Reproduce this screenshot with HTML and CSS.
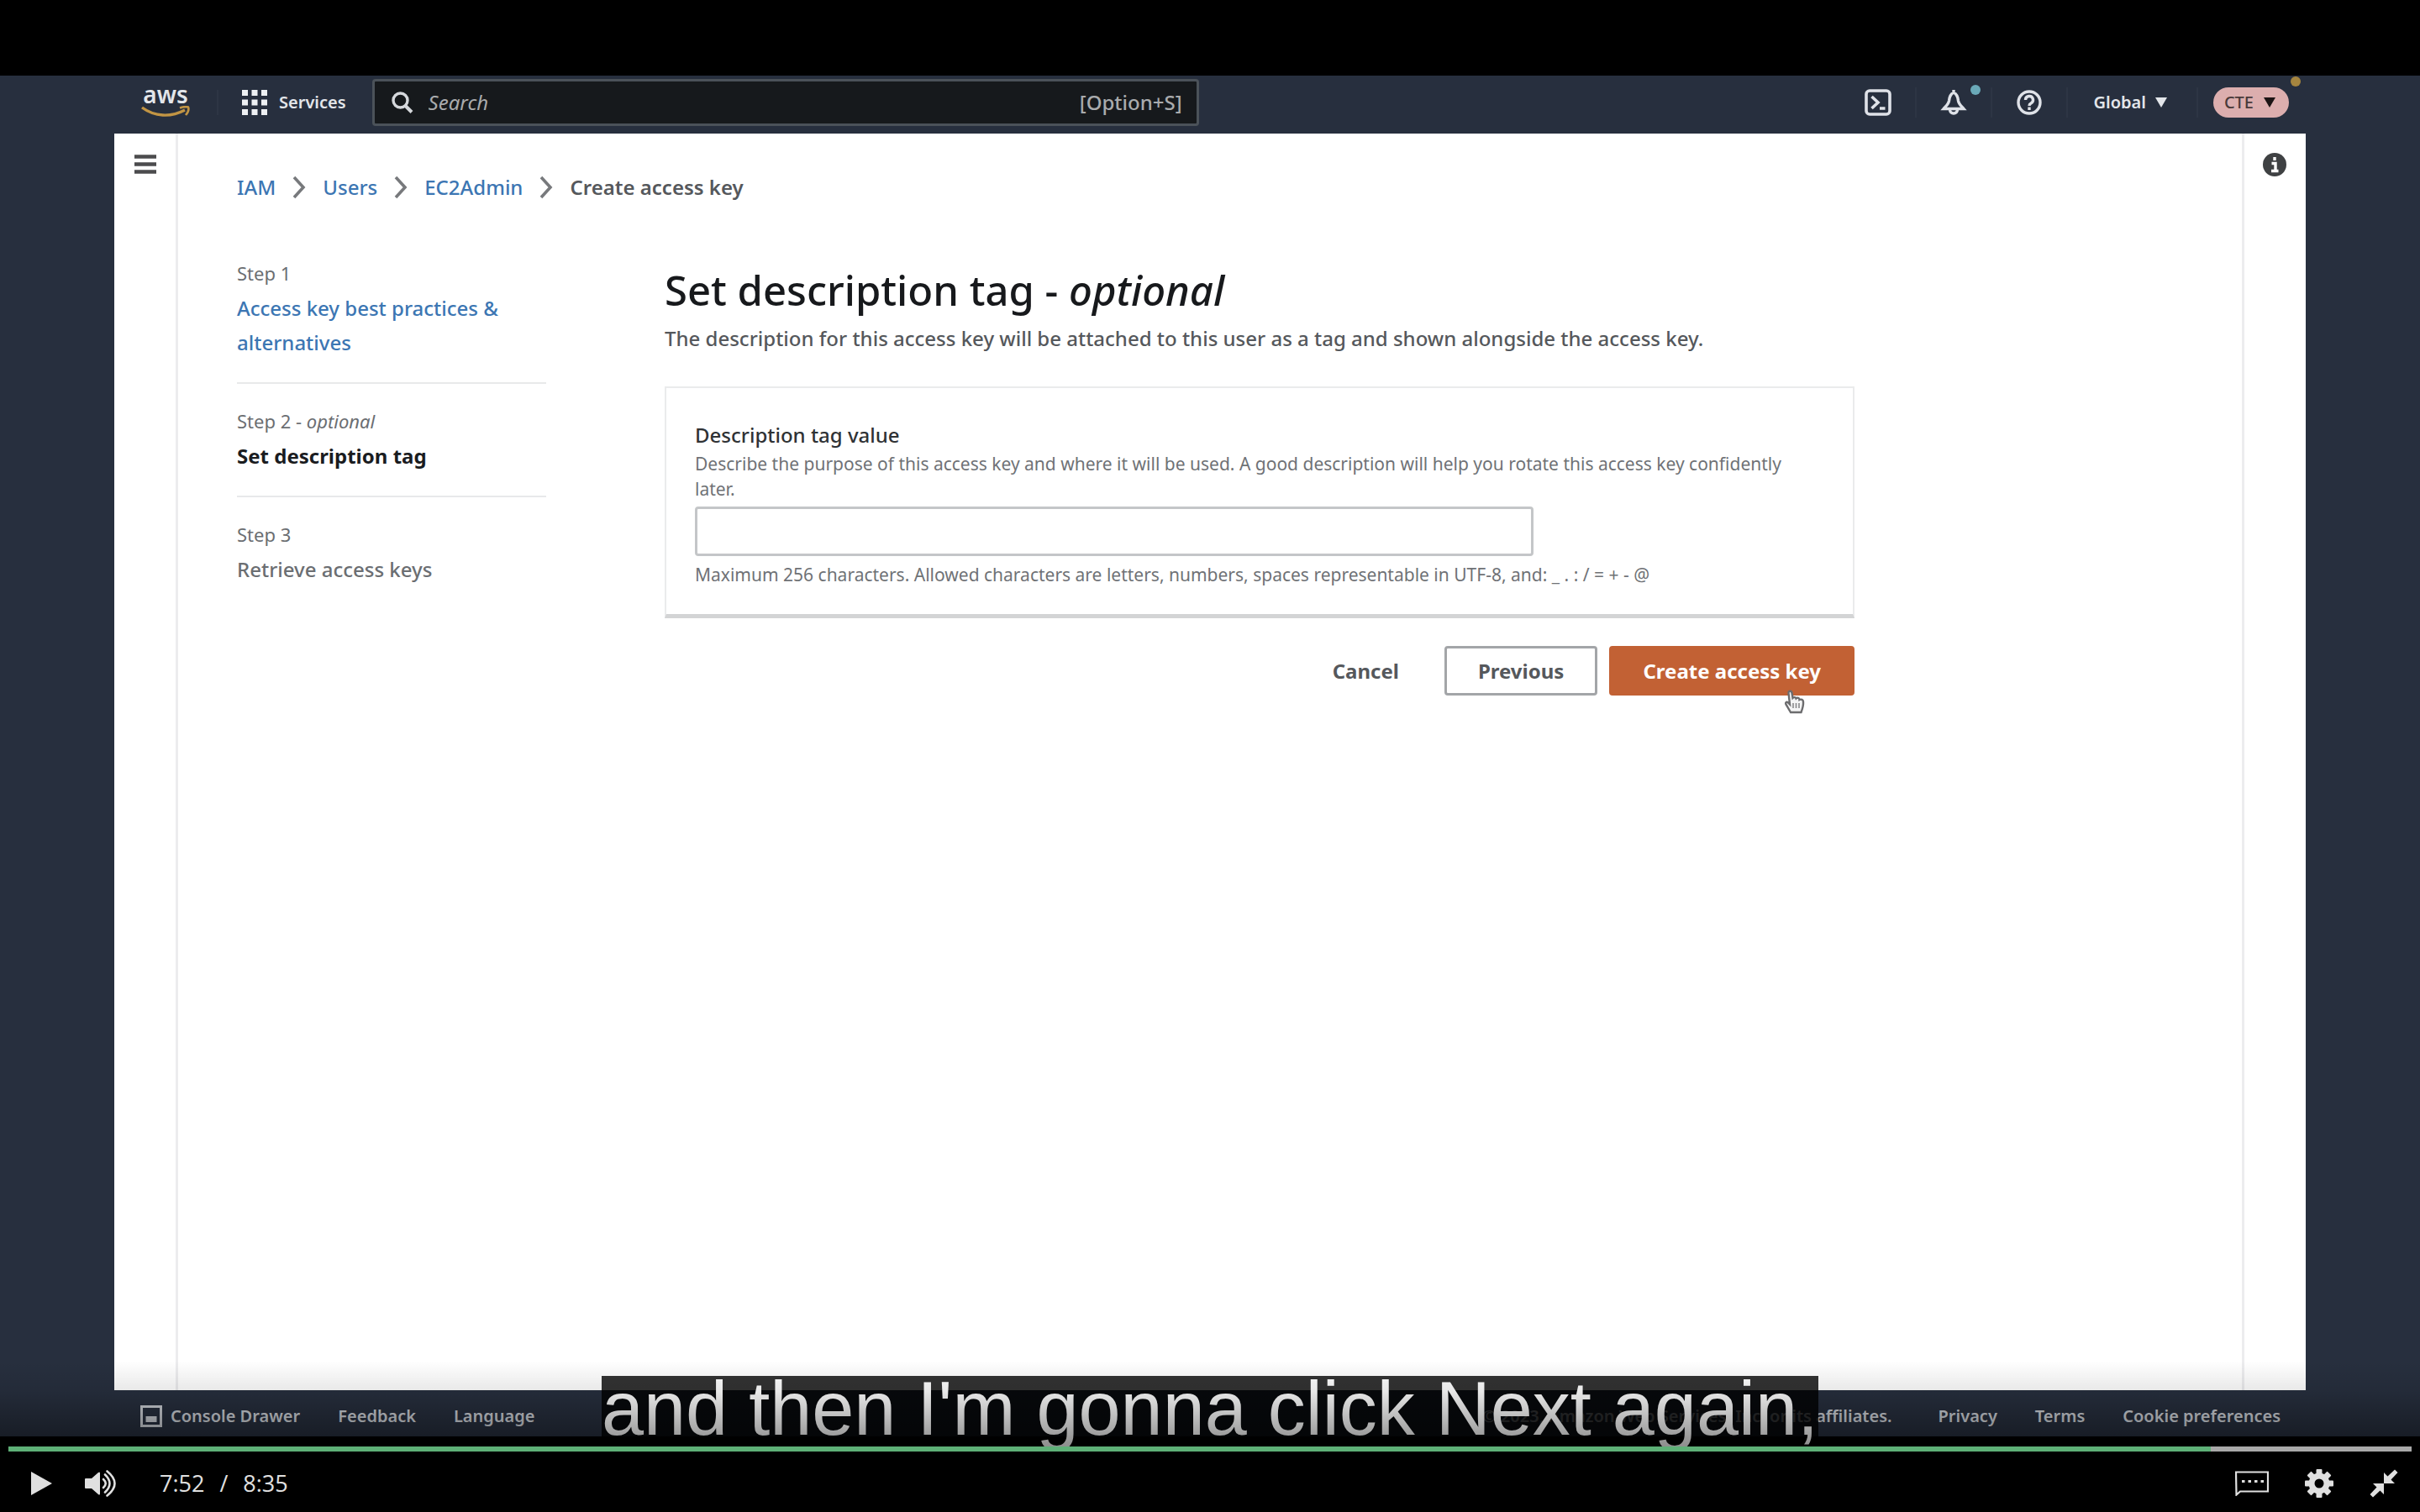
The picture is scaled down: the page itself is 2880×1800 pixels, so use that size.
FILE: index.html
```html
<!DOCTYPE html>
<html lang="en">
<head>
<meta charset="utf-8">
<title>Set description tag - IAM</title>
<link rel="stylesheet" href="styles.css">
</head>
<body>
<div class="player">
  <div class="screen">
    <header class="topnav">
      <a class="logo" href="#" aria-label="aws home">
        <span class="logo-word">aws</span>
        <svg class="logo-smile" viewBox="0 0 58 15" aria-hidden="true"><path d="M1 2C16 13 35 14 52 5" fill="none" stroke="#c29544" stroke-width="3.4"/><path d="M46 2.500C50 1 54 1 56 1.500C57 4 55.500 8 53 11" fill="none" stroke="#c29544" stroke-width="2.600"/></svg>
      </a>
      <button class="services" type="button">
        <svg class="icon-30" viewBox="0 0 30 30" aria-hidden="true"><g fill="#eef0f3"><rect width="7" height="7"/><rect x="11.500" width="7" height="7"/><rect x="23" width="7" height="7"/><rect y="11.500" width="7" height="7"/><rect x="11.500" y="11.500" width="7" height="7"/><rect x="23" y="11.500" width="7" height="7"/><rect y="23" width="7" height="7"/><rect x="11.500" y="23" width="7" height="7"/><rect x="23" y="23" width="7" height="7"/></g></svg>
        Services
      </button>
      <label class="search">
        <svg class="search-icon" viewBox="0 0 26 26" aria-hidden="true"><circle cx="10.500" cy="10.500" r="8.500" fill="none" stroke="#d5d8dc" stroke-width="3.400"/><path d="M16.500 17l7.500 7.500" stroke="#d5d8dc" stroke-width="4"/></svg>
        <input class="search-input" type="search" placeholder="Search" aria-label="Search">
        <span class="search-key">[Option+S]</span>
      </label>
      <div class="tools">
        <button class="tool" type="button" aria-label="CloudShell">
          <svg class="icon-32" viewBox="0 0 32 32" fill="none" stroke="#dfe2e8" stroke-width="3.600" aria-hidden="true"><rect x="2" y="2" width="28" height="28" rx="4"/><path d="M8.500 9l7.500 7-7.500 7M18 23h6.500"/></svg>
        </button>
        <button class="tool" type="button" aria-label="Notifications">
          <svg class="icon-32" viewBox="0 0 32 32" fill="none" stroke="#dfe2e8" stroke-width="3.400" aria-hidden="true"><path d="M16 4C12 6 11 9 10.500 14C10 18 7 20 4 23.500H28C25 20 22 18 21.500 14C21 9 20 6 16 4ZM16 1v3M11.500 24.500a4.500 4.500 0 0 0 9 0"/></svg>
          <span class="dot"></span>
        </button>
        <button class="tool" type="button" aria-label="Help">
          <svg class="icon-32" viewBox="0 0 32 32" fill="none" stroke="#dfe2e8" stroke-width="3.400" aria-hidden="true"><circle cx="16" cy="16" r="13"/><path d="M11.500 13a4.500 4.500 0 1 1 6.500 4c-1.600.8-2 1.500-2 3M16 21.500v3.500"/></svg>
        </button>
        <button class="region" type="button">Global
          <svg class="caret" viewBox="0 0 14 12" aria-hidden="true"><path d="M0 0h14L7 12z" fill="currentColor"/></svg>
        </button>
        <button class="account" type="button">CTE
          <svg class="caret" viewBox="0 0 14 12" aria-hidden="true"><path d="M0 0h14L7 12z" fill="currentColor"/></svg>
          <span class="dot dot-amber"></span>
        </button>
      </div>
    </header>

    <div class="workspace">
      <aside class="rail">
        <button class="rail-button" type="button" aria-label="Open navigation">
          <svg class="icon-26" viewBox="0 0 26 26" aria-hidden="true"><path d="M0 3.500h26M0 12.500h26M0 21.500h26" stroke="#4c4c4e" stroke-width="4.600"/></svg>
        </button>
      </aside>
      <main class="main">
        <nav class="crumbs" aria-label="Breadcrumb">
          <a href="#">IAM</a>
          <svg class="chevron" viewBox="0 0 16 28" aria-hidden="true"><path d="M2 2l11 12L2 26" fill="none" stroke="#77797c" stroke-width="3.600"/></svg>
          <a href="#">Users</a>
          <svg class="chevron" viewBox="0 0 16 28" aria-hidden="true"><path d="M2 2l11 12L2 26" fill="none" stroke="#77797c" stroke-width="3.600"/></svg>
          <a href="#">EC2Admin</a>
          <svg class="chevron" viewBox="0 0 16 28" aria-hidden="true"><path d="M2 2l11 12L2 26" fill="none" stroke="#77797c" stroke-width="3.600"/></svg>
          <span class="crumb-current">Create access key</span>
        </nav>
        <div class="wizard">
          <ol class="steps">
            <li class="step"><span class="step-label">Step 1</span><a class="step-name" href="#">Access key best practices &amp; alternatives</a></li>
            <li class="step step-current"><span class="step-label">Step 2 - <em>optional</em></span><span class="step-name">Set description tag</span></li>
            <li class="step"><span class="step-label">Step 3</span><span class="step-name">Retrieve access keys</span></li>
          </ol>
          <form class="form">
            <h1 class="title">Set description tag - <em>optional</em></h1>
            <p class="lead">The description for this access key will be attached to this user as a tag and shown alongside the access key.</p>
            <section class="card">
              <label class="field-label" for="tag">Description tag value</label>
              <p class="help">Describe the purpose of this access key and where it will be used. A good description will help you rotate this access key confidently later.</p>
              <input class="field" id="tag" type="text">
              <p class="help">Maximum 256 characters. Allowed characters are letters, numbers, spaces representable in UTF-8, and: _ . : / = + - @</p>
            </section>
            <div class="actions">
              <button class="button button-link" type="button">Cancel</button>
              <button class="button" type="button">Previous</button>
              <button class="button button-primary" type="button">Create access key
                <svg class="pointer" viewBox="0 0 26 32" aria-hidden="true"><path d="M8 29L3 20.500C1 17.500 3 16 5 17.500L7 19.500 5.500 6C5.500 3 9 3 9.500 6L10.500 12C12 10.500 14 11 14.500 12.500C16 11 18.500 12 18.500 14C20.500 13 23 14 23 16.500C23.500 21 22 25 20.500 29Z" fill="#f5f5f5" stroke="#6c6c6e" stroke-width="2.400"/><path d="M11 18v6M14.500 18v6M18 18v6" stroke="#8a8a8c" stroke-width="1.600"/></svg>
              </button>
            </div>
          </form>
        </div>
      </main>
      <aside class="rail rail-end">
        <button class="rail-button" type="button" aria-label="Info">
          <svg class="icon-28" viewBox="0 0 28 28" aria-hidden="true"><circle cx="14" cy="14" r="14" fill="#3f4143"/><path d="M14 5v4M10.500 12.500H15V21M10 21.500h8.500" fill="none" stroke="#fff" stroke-width="3.400"/></svg>
        </button>
      </aside>
    </div>

    <footer class="footer">
      <a class="drawer" href="#">
        <svg class="icon-26" viewBox="0 0 26 26" aria-hidden="true"><rect x="1.500" y="1.500" width="23" height="23" fill="none" stroke="#ccd0d6" stroke-width="3"/><path d="M6.500 13h13v7h-13z" fill="#ccd0d6"/></svg>
        Console Drawer
      </a>
      <a href="#">Feedback</a>
      <a href="#">Language</a>
      <span class="copyright">© 2023, Amazon Web Services, Inc. or its affiliates.</span>
      <a href="#">Privacy</a>
      <a href="#">Terms</a>
      <a href="#">Cookie preferences</a>
    </footer>
  </div>

  <div class="captions"><span class="caption">and then I'm gonna click Next again,</span></div>
  <div class="shade"></div>

  <div class="controls">
    <input class="seek" type="range" min="0" max="515" value="472" aria-label="Seek" style="--played: 91.65%">
    <div class="control-row">
      <button class="control" type="button" aria-label="Play">
        <svg class="play-icon" viewBox="0 0 26 28" aria-hidden="true"><path d="M1 0L26 14 1 28z" fill="#e0e0e0"/></svg>
      </button>
      <button class="control volume" type="button" aria-label="Mute">
        <svg class="volume-icon" viewBox="0 0 38 32" aria-hidden="true"><path d="M0 11q0-1 1-1H8L16 3q2-1.500 2 1V28q0 2.500-2 1L8 22H1q-1 0-1-1z" fill="#e0e0e0"/><path d="M22 11q5.500 5 0 10M24 5.500q11 10.500 0 21M26.500 1.500q18 14.500 0 29" fill="none" stroke="#e0e0e0" stroke-width="2.600" stroke-linecap="round"/></svg>
      </button>
      <span class="time"><span>7:52</span><span>/</span><span>8:35</span></span>
      <button class="control end" type="button" aria-label="Captions">
        <svg class="cc-icon" viewBox="0 0 40 30" aria-hidden="true"><path d="M1 1.500H39V24.500H6L1.500 28.500z" fill="none" stroke="#e0e0e0" stroke-width="2.200"/><path d="M8 12.500h3.500M15.500 12.500h3.500M23 12.500h3.500M30.500 12.500h3.500" stroke="#e0e0e0" stroke-width="3"/></svg>
      </button>
      <button class="control" type="button" aria-label="Settings">
        <svg class="icon-34" viewBox="0 0 34 34" aria-hidden="true"><g fill="#e0e0e0"><rect x="13.500" width="7" height="34" rx="1"/><rect x="13.500" width="7" height="34" rx="1" transform="rotate(45 17 17)"/><rect x="13.500" width="7" height="34" rx="1" transform="rotate(90 17 17)"/><rect x="13.500" width="7" height="34" rx="1" transform="rotate(135 17 17)"/><circle cx="17" cy="17" r="12.500"/></g><circle cx="17" cy="17" r="5.500" fill="#000"/></svg>
      </button>
      <button class="control" type="button" aria-label="Exit full screen">
        <svg class="icon-34" viewBox="0 0 34 34" aria-hidden="true"><path d="M17 17V4l4.500 4.500L30 0.500 33.500 4 25.500 12.500 30 17z M17 17v13l-4.500-4.500L4 33.500 0.500 30 8.500 21.500 4 17z" fill="#e0e0e0"/></svg>
      </button>
    </div>
  </div>
</div>
</body>
</html>
```
FILE: styles.css
```css
* {
  box-sizing: border-box;
}

body {
  margin: 0;
  background: #000;
  font-family: "Noto Sans", "Open Sans", sans-serif;
  font-size: 24px;
  color: #55585c;
}

button,
input {
  font: inherit;
  color: inherit;
}

button {
  padding: 0;
  border: 0;
  background: none;
}

a {
  color: inherit;
  text-decoration: none;
}

svg {
  display: block;
  flex: none;
}

.icon-26 { width: 26px; height: 26px; }
.icon-28 { width: 28px; height: 28px; }
.icon-30 { width: 30px; height: 30px; }
.icon-32 { width: 32px; height: 32px; }
.icon-34 { width: 34px; height: 34px; }

.player {
  position: relative;
  display: flex;
  flex-direction: column;
  min-height: 100vh;
  padding-top: 90px;
}

.screen {
  display: flex;
  flex: 1;
  flex-direction: column;
  padding: 0 136px;
  background: #272f3e;
}

/* Console header */
.topnav {
  display: flex;
  align-items: center;
  height: 69px;
  padding: 0 20px 6px 32px;
  color: #e3e6ea;
  font-size: 20px;
  font-weight: 500;
}

.logo {
  display: flex;
  flex-direction: column;
  align-items: center;
  width: 58px;
}

.logo-word {
  font-size: 28px;
  font-weight: 600;
  line-height: 20px;
}

.logo-smile {
  width: 58px;
  height: 15px;
  margin-top: 4px;
}

.services {
  display: flex;
  align-items: center;
  gap: 14px;
  margin-left: 32px;
  padding: 0 31px 0 28px;
  border-left: 2px solid #2d3544;
  font-weight: 600;
}

.search {
  display: flex;
  flex: 0 1 984px;
  align-items: center;
  gap: 18px;
  height: 56px;
  padding: 0 17px 0 20px;
  border: 3px solid #4b5259;
  border-radius: 4px;
  background: #16191c;
  font-size: 24px;
  font-weight: 400;
  color: #a9abad;
}

.search-icon {
  width: 26px;
  height: 26px;
}

.search-input {
  flex: 1;
  min-width: 0;
  padding: 0;
  border: 0;
  background: none;
}

.search-input::placeholder {
  color: #a9abad;
  font-style: italic;
}

.search-key {
  font-weight: 500;
}

.tools {
  display: flex;
  align-items: center;
  margin-left: auto;
}

.tool {
  position: relative;
  display: grid;
  place-items: center;
  width: 90px;
  height: 36px;
  border-right: 2px solid #2d3544;
}

.dot {
  position: absolute;
  top: -3px;
  right: 12px;
  width: 12px;
  height: 12px;
  border-radius: 50%;
  background: #6aa9b8;
}

.dot-amber {
  top: -13px;
  right: -14px;
  background: #a5853f;
}

.region {
  display: flex;
  align-items: center;
  gap: 11px;
  height: 36px;
  padding: 0 35px 0 31px;
  border-right: 2px solid #2d3544;
  font-weight: 600;
}

.caret {
  width: 14px;
  height: 12px;
}

.account {
  position: relative;
  display: flex;
  align-items: center;
  gap: 12px;
  height: 36px;
  margin-left: 18px;
  padding: 0 16px 0 13px;
  border-radius: 18px;
  background: #dcaeae;
  color: #4a3a3a;
}

.account .caret {
  color: #1c1414;
}

/* White work area between the two rails */
.workspace {
  display: flex;
  flex: 1;
  background: #fff;
}

.rail {
  flex: none;
  width: 76px;
  padding: 24px 0 0 24px;
  border-right: 3px solid #ececee;
}

.rail-end {
  padding: 23px 0 0 22px;
  border-right: 0;
  border-left: 3px solid #ececee;
}

.main {
  flex: 1;
  min-width: 0;
  padding: 44px 40px 44px 70px;
}

.crumbs {
  display: flex;
  align-items: center;
  gap: 20px;
  line-height: 40px;
  font-weight: 500;
}

.crumbs a,
.step a {
  color: #3c76b3;
}

.crumb-current {
  font-weight: 600;
}

.chevron {
  width: 16px;
  height: 28px;
}

.wizard {
  display: grid;
  grid-template-columns: 368px minmax(0, 1416px);
  gap: 141px;
  margin-top: 66px;
}

.steps {
  margin: 0;
  padding: 0;
  list-style: none;
  color: #6b6e72;
}

.step {
  margin-bottom: 28px;
  padding-bottom: 27px;
  border-bottom: 2px solid #e8e9ea;
}

.step:last-child {
  border-bottom: 0;
}

.step-label {
  display: block;
  margin-bottom: 5px;
  font-size: 22px;
  line-height: 32px;
}

.step-name {
  display: block;
  font-weight: 500;
  line-height: 41px;
}

.step-current .step-name {
  color: #1a1c1f;
  font-weight: 700;
}

.title {
  margin: 0;
  color: #17191c;
  font-size: 49px;
  font-weight: 500;
  line-height: 72px;
}

.lead {
  margin: 4px 0 39px;
  font-weight: 500;
  line-height: 36px;
}

.card {
  padding: 39px 34px 26px;
  border: 2px solid #eaebec;
  border-bottom: 5px solid #d3d4d5;
}

.field-label {
  display: block;
  color: #2f3235;
  font-weight: 500;
  line-height: 34px;
}

.help {
  margin: 2px 0 6px;
  color: #6f7276;
  font-size: 21px;
  line-height: 30px;
}

.field {
  display: block;
  width: 100%;
  max-width: 998px;
  height: 59px;
  margin-bottom: 7px;
  padding: 0 20px;
  border: 3px solid #c4c6c8;
  border-radius: 4px;
  background: #fff;
}

.actions {
  display: flex;
  justify-content: flex-end;
  gap: 14px;
  margin-top: 33px;
}

.button {
  position: relative;
  height: 59px;
  padding: 0 37px;
  border: 3px solid #a3a5a8;
  border-radius: 4px;
  font-weight: 700;
}

.button-link {
  border-color: transparent;
}

.button-primary {
  border-color: #c26134;
  background: #c26134;
  color: #fff;
}

.pointer {
  position: absolute;
  right: 55px;
  bottom: -26px;
  width: 26px;
  height: 32px;
}

/* Console footer */
.footer {
  display: flex;
  align-items: center;
  gap: 45px;
  height: 55px;
  padding: 6px 30px 0 31px;
  color: #ced2d8;
  font-size: 20px;
  font-weight: 600;
}

.drawer {
  display: flex;
  align-items: center;
  gap: 10px;
}

.copyright {
  margin-left: auto;
  padding-right: 10px;
}

/* Video player overlay */
.captions {
  position: absolute;
  right: 0;
  bottom: 78px;
  left: 0;
  display: flex;
  justify-content: center;
}

.caption {
  background: rgba(0, 0, 0, 0.8);
  color: #fff;
  font-family: "Liberation Sans", Arial, sans-serif;
  font-size: 90px;
  line-height: 78px;
  padding-bottom: 6px;
}

.shade {
  position: absolute;
  right: 0;
  bottom: 0;
  left: 0;
  height: 180px;
  background: linear-gradient(transparent, rgba(0, 0, 0, 0.09) 20%, rgba(0, 0, 0, 0.39) 50%, rgba(0, 0, 0, 0.8));
}

.controls {
  position: relative;
  height: 90px;
  padding: 12px 10px 0;
}

.seek {
  display: block;
  width: 100%;
  height: 6px;
  margin: 0;
  appearance: none;
  background: linear-gradient(to right, #5eb077 var(--played), #a8a8a8 var(--played));
}

.seek::-webkit-slider-thumb {
  width: 1px;
  height: 6px;
  appearance: none;
}

.control-row {
  display: flex;
  align-items: center;
  gap: 43px;
  height: 72px;
  padding: 3px 16px 0 26px;
}

.play-icon { width: 26px; height: 28px; }
.volume-icon { width: 38px; height: 32px; }
.cc-icon { width: 40px; height: 30px; }

.volume {
  margin: 0 8px 0 -4px;
}

.time {
  display: flex;
  gap: 18px;
  color: #e0e0e0;
  font-family: "Open Sans", "Noto Sans", sans-serif;
  font-size: 27px;
}

.end {
  margin-left: auto;
}
```
